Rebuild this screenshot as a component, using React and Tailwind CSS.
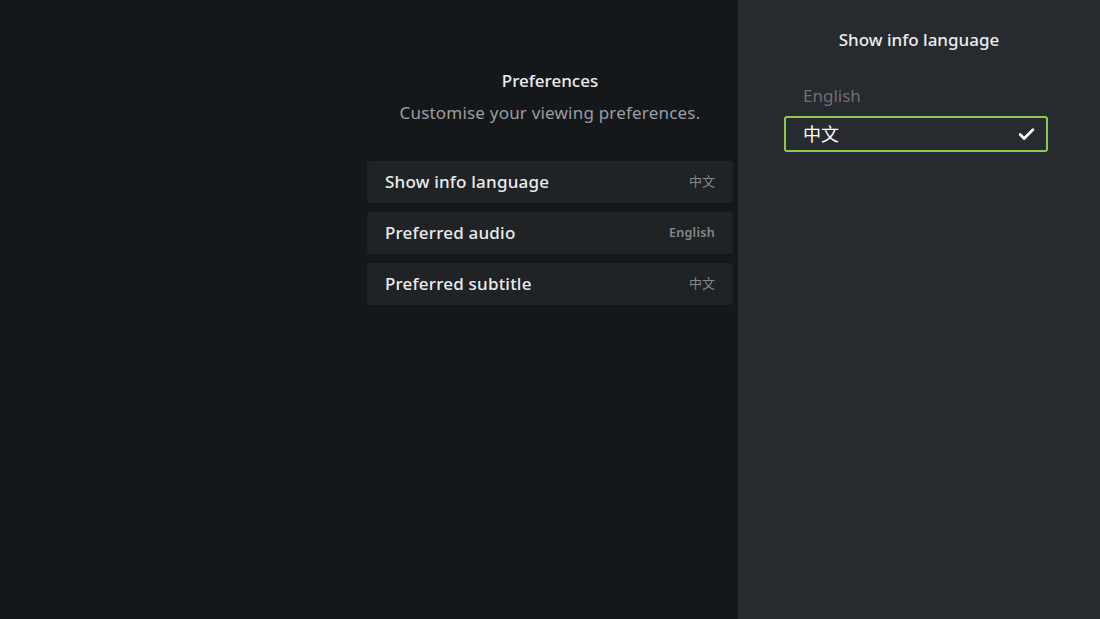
import { Check } from "lucide-react"

const ROWS = [
  { label: "Show info language", value: "中文", cjk: true },
  { label: "Preferred audio", value: "English", cjk: false },
  { label: "Preferred subtitle", value: "中文", cjk: true },
]

const LANGS = ["English", "中文"]

export default function App() {
  const selected = "中文"
  return (
    <div
      className="flex h-[619px] w-[1100px] overflow-hidden bg-[#15181b] text-white"
      style={{ fontFamily: '"Noto Sans", "Noto Sans CJK SC", sans-serif' }}
    >
      {/* main */}
      <div className="w-[738px] shrink-0 pl-[367px] pr-[5px] pt-[69px]">
        <h1 className="text-center text-[17px] font-medium leading-6 text-[#eceded]">Preferences</h1>
        <p className="mt-[8px] text-center text-[17px] leading-6 text-[#9a9da1] tracking-[0.2px]">
          Customise your viewing preferences.
        </p>
        <div className="mt-[36px] flex flex-col gap-[9px]">
          {ROWS.map((row) => (
            <div
              key={row.label}
              className="flex h-[42px] items-center justify-between rounded-[3px] bg-[#202326] pl-[18px] pr-[18px]"
            >
              <span className="text-[17px] font-medium text-[#ebeced] tracking-[0.2px]">{row.label}</span>
              <span
                className={
                  row.cjk
                    ? "text-[13px] text-[#85888c]"
                    : "text-[12.5px] font-semibold text-[#85888c] tracking-[0.3px]"
                }
              >
                {row.value}
              </span>
            </div>
          ))}
        </div>
      </div>

      {/* side panel */}
      <div className="flex-1 bg-[#272a2f] pt-[28px]">
        <h2 className="text-center text-[17px] font-medium leading-6 text-[#eceded]">Show info language</h2>
        <div className="mt-[26px] flex flex-col gap-[2px] pl-[46px] pr-[52px]">
          {LANGS.map((lang) =>
            lang === selected ? (
              <div
                key={lang}
                className="flex h-[36px] items-center justify-between rounded-[3px] border-2 border-[#8cc751] pl-[17px] pr-[10px]"
              >
                <span className="text-[18px] text-white">{lang}</span>
                <Check size={19} strokeWidth={3.5} className="text-white" />
              </div>
            ) : (
              <div key={lang} className="flex h-[36px] items-center pl-[19px]">
                <span className="text-[17px] text-[#6e7175]">{lang}</span>
              </div>
            )
          )}
        </div>
      </div>
    </div>
  )
}
